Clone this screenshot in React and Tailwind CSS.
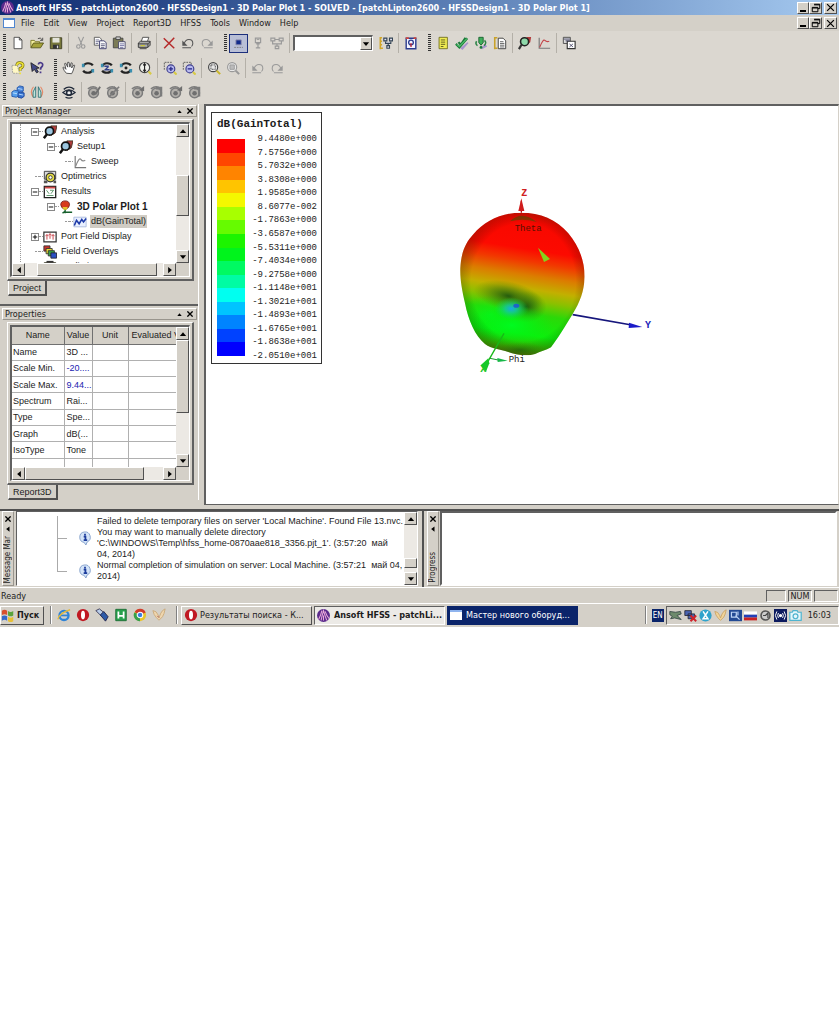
import React from 'react';
import clsx from 'clsx';

const raised = 'border border-t-white border-l-white border-r-[#505050] border-b-[#505050] bg-[#d4d0c8]';
const sunken = 'border border-t-[#606060] border-l-[#606060] border-r-white border-b-white';
const tahoma = 'font-["DejaVu_Sans_Condensed",sans-serif]';
const arial = 'font-["Liberation_Sans",Arial,sans-serif]';

const Svg = ({ children, className = 'size-[14px]' }) => (
  <svg viewBox="0 0 16 16" className={clsx('shrink-0', className)} fill="none" aria-hidden="true">
    {children}
  </svg>
);

// Shared shapes for the toolbar icons
const eye = (color) => (
  <>
    <path d="M1 8.5Q8 2.5 15 8.5Q8 14.5 1 8.5Z" fill="#eee" stroke={color} strokeWidth="1.4" />
    <circle cx="8" cy="9" r="2.8" stroke={color} strokeWidth="1.8" />
    <path d="M2 5Q8 0 14 5M4 14Q8 16 12 14" stroke={color} strokeWidth="1.5" />
  </>
);

const rotate = (
  <>
    <path d="M2.5 6Q4 2.5 8 2.5Q12 2.5 13.5 5" stroke="#222" strokeWidth="2.4" />
    <path d="M13.5 10Q12 13.5 8 13.5Q4 13.5 2.5 11" stroke="#222" strokeWidth="2.4" />
    <path d="M1 3h3v4H1zM12 9h3v4h-3z" fill="#3a8fb0" />
  </>
);

const grayEye = (extra) => (
  <>
    <circle cx="7.5" cy="9" r="5.6" fill="#b4b1ac" stroke="#7c7c7c" strokeWidth="1.7" />
    <circle cx="7.5" cy="9.5" r="2.6" fill="#6f6f6f" />
    <path d="M1 4.500Q7 0 12 4" stroke="#7c7c7c" strokeWidth="1.700" />
    {extra}
  </>
);

const lens = (color) => (
  <>
    <circle cx="7" cy="7" r="5.2" stroke={color} strokeWidth="1.3" fill="#e8e8e8" />
    <path d="M11 11l4 4" stroke={color === '#999' ? '#999' : '#c9b52c'} strokeWidth="2.4" />
  </>
);

const icons = {
  new: <path d="M3.5 1.5h6l3 3v10h-9zM9.5 1.5v3h3" fill="#fff" stroke="#444" />,
  open: (
    <>
      <path d="M1 13V5h4l1 1.500h5V8" fill="#f5f0a0" stroke="#77751f" />
      <path d="M1 13.500L4 8h11.500l-3.500 5.500z" fill="#a5a23a" stroke="#55531a" />
      <path d="M9 3q3-2 5 1.500M14.500 2v3h-3" stroke="#444" />
    </>
  ),
  save: (
    <>
      <path d="M1.500 2h13v12.500h-13z" fill="#77773a" stroke="#3c3c20" />
      <path d="M4 2h8v5.500H4z" fill="#e4e4da" />
      <path d="M4.500 10h7v4.500h-7z" fill="#333" />
      <path d="M9 11h1.500v3H9z" fill="#ddd" />
    </>
  ),
  cut: (
    <>
      <path d="M5 1l4 9M11 1L7 10" stroke="#999" strokeWidth="1.300" />
      <circle cx="5" cy="12" r="2" stroke="#999" strokeWidth="1.300" />
      <circle cx="10.500" cy="12" r="2" stroke="#999" strokeWidth="1.300" />
    </>
  ),
  copy: (
    <>
      <path d="M1.500 1.500h6l2 2v7h-8z" fill="#fff" stroke="#555" />
      <path d="M3 4.500h4M3 6.500h4M3 8.500h3" stroke="#668" />
      <path d="M7.500 5.500h5l2.500 2v7H7.500z" fill="#fff" stroke="#336" />
      <path d="M9 9h4.500M9 11h4.500M9 13h4" stroke="#557" />
    </>
  ),
  paste: (
    <>
      <path d="M1.500 2.500h11v11h-11z" fill="#7b7b55" stroke="#444" />
      <path d="M4.500 1h5v3h-5z" fill="#ccc" stroke="#444" />
      <path d="M7.500 6.500h7.500v8H7.500z" fill="#fff" stroke="#446" />
      <path d="M9 9h5M9 11h5M9 13h4" stroke="#669" />
    </>
  ),
  print: (
    <>
      <path d="M5 6l1.500-4.500h7L12 6" fill="#fff" stroke="#444" />
      <path d="M1.500 8L4 6h11v4.500L12.500 13h-11z" fill="#aaa" stroke="#333" />
      <path d="M1.500 9h11v4M12.500 9L15 6.500M3 14.500h8" stroke="#333" />
      <path d="M4 11h5" stroke="#c9c43a" strokeWidth="1.500" />
    </>
  ),
  remove: <path d="M2 2.500L14 14M14 2L2.500 14" stroke="#b52a2a" strokeWidth="1.700" />,
  undo: (
    <>
      <path d="M3.500 9Q5 4 9 4Q13.500 4 13.500 8.500Q13.500 10.500 12 12M1.500 13.500h10" stroke="#555" strokeWidth="1.200" />
      <path d="M1.500 5v6h6z" fill="#555" />
    </>
  ),
  redo: (
    <>
      <path d="M12.500 9Q11 4 7 4Q2.500 4 2.500 8.500Q2.500 10.500 4 12M4.500 13.500h10" stroke="#999" strokeWidth="1.200" />
      <path d="M14.500 5v6h-6z" fill="#999" />
    </>
  ),
  undoGray: (
    <>
      <path d="M3.500 9Q5 4 9 4Q13.500 4 13.500 8.500Q13.500 10.500 12 12M1.500 13.500h10" stroke="#999" strokeWidth="1.200" />
      <path d="M1.500 5v6h6z" fill="#999" />
    </>
  ),
  local: (
    <>
      <path d="M4.500 4.500h6v5.500h-6z" fill="#112a8c" stroke="#88a" />
      <path d="M2.500 13h10" stroke="#777" strokeDasharray="2 1" />
    </>
  ),
  remote: (
    <>
      <path d="M5 2.500h6v5H5zM6 9h4M8 8v6M5.500 13.500h5" stroke="#999" strokeWidth="1.300" />
      <path d="M6.500 4h3" stroke="#999" />
    </>
  ),
  network: (
    <path d="M1 2.500h4.500v3H1zM10.500 2.500H15v3h-4.500zM3 6v3h10V6M8 9v2M6 11.500h4v3H6zM6 4h4" stroke="#999" strokeWidth="1.300" />
  ),
  analysisConfig: (
    <>
      <path d="M1.500 1v14M1.500 2h2M1.500 6h2M1.500 10h2M1.500 14h3" stroke="#d1a72a" strokeWidth="1.800" />
      <path d="M5.500 2.500h3.500v3H5.500zM12 2.500h3.500v3H12zM7.500 6.500v2h6v-2M10.500 9v2M9 11h3v3H9z" fill="#dde" stroke="#345" strokeWidth="1.300" />
    </>
  ),
  queue: (
    <>
      <path d="M2.500 2.500h11v12h-11z" fill="#f4f4ff" stroke="#2b3b8e" strokeWidth="1.600" />
      <path d="M2 2.500h3.500M11 2.500h3" stroke="#d0453c" strokeWidth="2" />
      <circle cx="8" cy="7.500" r="2.700" stroke="#2b3b8e" strokeWidth="1.500" />
      <path d="M8 8v4.500" stroke="#b23" strokeWidth="1.500" />
    </>
  ),
  notes: (
    <>
      <path d="M3.500 1.500h9.500v13H3.500z" fill="#f0ec52" stroke="#6f6d1d" />
      <path d="M5.500 4.500h5M5.500 7h5M5.500 9.500h5M5.500 12h3" stroke="#55531a" />
    </>
  ),
  validate: (
    <>
      <path d="M6 14l8-7 1.500 1-7 8z" fill="#a793cc" />
      <path d="M1 9L5 13 14 2.500M4 7l2.500 3L12 2" stroke="#1c7a3a" strokeWidth="2.500" />
      <path d="M2 9.500L5 12 13.500 3" stroke="#4fc36f" strokeWidth="1.300" />
    </>
  ),
  analyze: (
    <>
      <path d="M9 15l6-3-2-3-5 4z" fill="#a793cc" />
      <path d="M5.500 1.500h5v6l-2.500 3-2.500-3z" fill="#3fae5b" stroke="#17602d" />
      <path d="M3 6Q1 9 4 11M12 5Q15 8 11.500 11" stroke="#2b8446" strokeWidth="1.700" />
      <circle cx="8" cy="13" r="1.600" fill="#1c7a3a" />
    </>
  ),
  profile: (
    <>
      <path d="M2 1v14M2 2h3M2 14h3" stroke="#c9a22a" strokeWidth="1.800" />
      <path d="M6 2.500h5.500l3 3v9H6z" fill="#fff" stroke="#333" />
      <path d="M8 6.500h4M8 8.500h5M8 10.500h5M8 12.500h5" stroke="#555" />
    </>
  ),
  magnify: (
    <>
      <path d="M10 1h5l-1 6-4 3z" fill="#b23b3b" />
      <circle cx="7.500" cy="6.500" r="4.600" fill="#8fd8a9" stroke="#222" strokeWidth="1.800" />
      <path d="M4 10L1 15" stroke="#333" strokeWidth="2.500" />
    </>
  ),
  plot: (
    <>
      <path d="M2.500 2v12H15" stroke="#777" strokeWidth="1.300" />
      <path d="M3 13Q7 3 9 5T14 6" stroke="#c4454a" strokeWidth="1.400" />
    </>
  ),
  windows: (
    <>
      <path d="M1.500 1.500h8v7h-8z" fill="#ddd" stroke="#444" />
      <path d="M6 6h9v8.500H6z" fill="#fff" stroke="#333" strokeWidth="1.300" />
      <path d="M8.500 9l4 3.500M12.500 9l-4 3.500M2 3.500h7M4 5.500h5" stroke="#446" />
    </>
  ),
  helpDoc: (
    <>
      <path d="M1 5h6l3 9H2z" fill="#fff8c4" stroke="#999" strokeDasharray="2 1" />
      <path d="M6.500 5Q7 1.500 10.500 2Q14.500 2.500 13.500 6Q12.500 8 10.500 8.500V11" stroke="#77710a" strokeWidth="3.200" />
      <path d="M6.500 5Q7 1.500 10.500 2Q14.500 2.500 13.500 6Q12.500 8 10.500 8.500V11M10.500 13v2" stroke="#f2e53a" strokeWidth="1.800" />
    </>
  ),
  helpPointer: (
    <>
      <path d="M1 2l1.500 10 2.500-2.500 2.500 4 2-1-2.500-4 3.500-.5z" fill="#444a88" stroke="#222" />
      <path d="M9.500 4Q10 1.500 12.500 2Q15.500 3 14 6Q12 7.500 12 10M12 12v2" stroke="#4a3a8a" strokeWidth="2" />
    </>
  ),
  hand: (
    <path
      d="M5 14Q2 11 1 7.500L2 7l2.500 2.500L3 3l1.300-.5L6.500 7 6.500 1.500h1.500L9 7l1.500-5 1.300.5L11 8l2.500-3.500 1 .5-2 6.500-1.500 3z"
      fill="#fff"
      stroke="#444"
    />
  ),
  rotateA: rotate,
  rotateB: (
    <>
      {rotate}
      <path d="M5 6h5M10 6l-4 4h5" stroke="#33418a" strokeWidth="1.600" />
    </>
  ),
  rotateC: (
    <>
      {rotate}
      <circle cx="8" cy="8" r="1.700" fill="#222" />
    </>
  ),
  zoom: (
    <>
      <circle cx="7.500" cy="7.500" r="5.800" fill="#f1f1ec" stroke="#444" strokeWidth="1.300" />
      <path d="M7.500 4v7M6 5l1.500-2L9 5M6 10l1.500 2L9 10" stroke="#222" strokeWidth="1.300" />
      <path d="M12 12l3 3" stroke="#d7ca45" strokeWidth="2.500" />
    </>
  ),
  zoomIn: (
    <>
      <path d="M1.500 10V1.500h9" stroke="#555" strokeDasharray="2 1" />
      <circle cx="9" cy="9" r="4.500" fill="#b7b9ef" stroke="#3d3d8d" strokeWidth="1.300" />
      <path d="M6.500 9h5M9 6.500v5" stroke="#2a2a88" strokeWidth="1.500" />
      <path d="M12.500 12.500l3 3" stroke="#d7ca45" strokeWidth="2.500" />
    </>
  ),
  zoomOut: (
    <>
      <path d="M1.500 10V1.500h9v3" stroke="#555" strokeDasharray="2 1" />
      <circle cx="9" cy="9" r="4.500" fill="#b7b9ef" stroke="#3d3d8d" strokeWidth="1.300" />
      <path d="M6.500 9h5" stroke="#2a2a88" strokeWidth="1.500" />
      <path d="M12.500 12.500l3 3" stroke="#d7ca45" strokeWidth="2.500" />
    </>
  ),
  fitAll: (
    <>
      {lens('#444')}
      <path d="M4.500 4.500h5v5h-5z" stroke="#444" strokeDasharray="2 1" />
    </>
  ),
  fitSel: (
    <>
      {lens('#999')}
      <path d="M4.500 4.500h5v5h-5z" fill="#bbb" stroke="#999" />
    </>
  ),
  boxes: (
    <>
      <path d="M7 3l3-2 4 1v5l-3 2-4-1z" fill="#4a86dc" stroke="#2356a8" />
      <path d="M1 8l3-2 5 1v5l-3 2-5-1z" fill="#56a0ee" stroke="#2356a8" />
      <path d="M8 9l3-1 4 1v4l-3 2-4-1z" fill="#3571cf" stroke="#20489a" />
      <path d="M2 9l5 1M8 4l5 1M9 10.500l5 1" stroke="#bfe0ff" />
    </>
  ),
  boundary: (
    <>
      <path d="M4 2Q-1 8 4 14M12 2Q17 8 12 14" stroke="#e58a68" strokeWidth="1.300" />
      <path d="M6.500 2v12h-3V8zM9.500 2v12h3V8z" fill="#bfe6dc" stroke="#2c6f74" />
    </>
  ),
  eye: eye('#222b3a'),
  eyeOff1: grayEye(<path d="M7 8l3 2 5-8" stroke="#6f6f6f" strokeWidth="2.200" />),
  eyeOff2: grayEye(<path d="M3 14L15 2M9 2l5 5" stroke="#7c7c7c" strokeWidth="2" />),
  eyeOff3: grayEye(<path d="M9 6l6-5v6z" fill="#6f6f6f" />),
  eyeOff4: grayEye(<path d="M7 2h7v11h-2.500V5H7z" fill="#7c7c7c" />),
};

const Tool = ({ name, label, active }) => (
  <button
    type="button"
    aria-label={label || name}
    className={clsx(
      'flex h-[19px] w-[19px] shrink-0 items-center justify-center',
      active && 'border border-[#1c2f7c] bg-[#b9bfd6]'
    )}
  >
    <Svg>{icons[name]}</Svg>
  </button>
);

const Sep = () => (
  <div className="flex w-1.5 shrink-0 justify-center">
    <div className="h-5 w-px bg-[#b4b0a8]" />
  </div>
);

const Grip = ({ first }) => (
  <div className={clsx('shrink-0 pl-[3px]', first ? 'w-2' : 'ml-[5px] w-2')}>
    <div className="h-[18px] w-[3px] bg-[repeating-linear-gradient(#333_0_1px,#dbd7d0_1px_2px)]" />
  </div>
);

// '|' is a separator, ':' is a grip
const Tools = ({ items }) =>
  items.map((item, i) => {
    if (item === '|') return <Sep key={i} />;
    if (item === ':') return <Grip key={i} first={i === 0} />;
    return <Tool key={i} name={item} active={item === 'local'} />;
  });

const WindowButtons = () => (
  <div className="flex items-center pr-0.5">
    <button type="button" aria-label="Minimize" className={clsx(raised, 'flex h-3 w-3 items-end justify-center')}>
      <span className="mb-px h-0.5 w-1.5 bg-black" />
    </button>
    <button type="button" aria-label="Restore" className={clsx(raised, 'flex h-3 w-[13px] items-center justify-center')}>
      <Svg className="size-[10px]">
        <path d="M5 2h9v7h-3M5 3h9M2 7h9v7H2zM2 8h9" stroke="#000" strokeWidth="1.600" />
      </Svg>
    </button>
    <button type="button" aria-label="Close" className={clsx(raised, 'ml-0.5 flex h-3 w-[13px] items-center justify-center')}>
      <Svg className="size-[9px]">
        <path d="M2 2l12 12M14 2L2 14" stroke="#000" strokeWidth="2.200" />
      </Svg>
    </button>
  </div>
);

const arrows = {
  up: 'M3 11l5-6 5 6z',
  down: 'M3 5l5 6 5-6z',
  left: 'M11 3l-6 5 6 5z',
  right: 'M5 3l6 5-6 5z',
};

const ScrollButton = ({ dir }) => (
  <button type="button" aria-label={`Scroll ${dir}`} className={clsx(raised, 'flex size-[13px] shrink-0 items-center justify-center')}>
    <Svg className="size-[10px]">
      <path d={arrows[dir]} fill="#000" />
    </Svg>
  </button>
);

const VScroll = ({ before, thumb }) => (
  <div className="flex w-[13px] shrink-0 flex-col bg-[#ece9e4]">
    <ScrollButton dir="up" />
    <div className={before} />
    <div className={clsx(raised, thumb)} />
    <div className="flex-1" />
    <ScrollButton dir="down" />
  </div>
);

const HScroll = ({ before, thumb }) => (
  <div className="flex bg-[#d4d0c8]">
    <div className="flex flex-1 bg-[#ece9e4]">
      <ScrollButton dir="left" />
      <div className={before} />
      <div className={clsx(raised, thumb)} />
      <div className="flex-1" />
      <ScrollButton dir="right" />
    </div>
    <div className="w-[13px]" />
  </div>
);

const PanelHeader = ({ title }) => (
  <div className="mr-px ml-0.5 flex h-3 items-center border border-t-white border-l-white border-r-[#99958d] border-b-[#99958d]">
    <h2 className="flex-1 pl-0.5 text-[9px] leading-[10px]">{title}</h2>
    <button type="button" aria-label={`Collapse ${title}`} className="mr-[5px]">
      <Svg className="size-[5px]">
        <path d="M1 13l7-9 7 9z" fill="#000" />
      </Svg>
    </button>
    <button type="button" aria-label={`Close ${title}`} className="mr-[3px]">
      <Svg className="size-[6px]">
        <path d="M1 1l14 14M15 1L1 15" stroke="#000" strokeWidth="3.500" />
      </Svg>
    </button>
  </div>
);

const TabLabel = ({ children }) => (
  <button
    type="button"
    className={clsx(arial, 'ml-2 h-[15px] border-r-2 border-b-2 border-l border-r-[#505050] border-b-[#505050] border-l-white px-1 text-[9px] leading-3')}
  >
    {children}
  </button>
);

const Sheet = ({ children }) => (
  <div className="mt-0.5 mr-1 ml-[7px] border border-t-white border-l-white border-r-2 border-b-2 border-r-[#606060] border-b-[#606060] p-0.5">
    <div className={clsx(sunken, 'border-t-2 border-l-2')}>{children}</div>
  </div>
);

const treeIcons = {
  analysis: (
    <>
      <path d="M9 1h7l-2 8-5 3z" fill="#b03c3c" stroke="#432" />
      <circle cx="7.500" cy="7" r="4.600" fill="#9cc6e0" stroke="#111" strokeWidth="2" />
      <path d="M4.500 10.500L1 15" stroke="#111" strokeWidth="2.800" />
    </>
  ),
  sweep: (
    <>
      <path d="M2.500 1v13.500H15" stroke="#777" strokeWidth="1.300" />
      <path d="M3 13Q7 2 9 5T14 6" stroke="#888" strokeWidth="1.300" />
    </>
  ),
  optimetrics: (
    <>
      <path d="M1.500 1.500h13v9h-13z" fill="#ddd" stroke="#333" />
      <circle cx="8.500" cy="8.500" r="5" fill="#e8df44" stroke="#333" strokeWidth="1.400" />
      <circle cx="8.500" cy="8.500" r="2" fill="#fff" stroke="#333" />
      <path d="M1 12h4v3H1zM12 12h3v3h-3z" fill="#555" />
    </>
  ),
  results: (
    <>
      <path d="M1.500 1.500h13v13h-13z" fill="#fff" stroke="#222" strokeWidth="1.500" />
      <path d="M2 3h12" stroke="#d04a4a" strokeWidth="2" />
      <path d="M4 6l3 4M8 6h4l-3 4M4 12h8" stroke="#4a8a5a" />
    </>
  ),
  polar: (
    <>
      <path d="M7 1Q12 1 12 5.500Q12 9 7 11Q2 9 2 5.500Q2 1 7 1Z" fill="#d83a1c" stroke="#722" />
      <path d="M4 8h6l-1.500 3.500h-3z" fill="#e3c22d" />
      <path d="M7 11v4M7 14h8M7 13l-3 2" stroke="#17602d" strokeWidth="1.600" />
    </>
  ),
  trace: (
    <>
      <path d="M1 2.500h14v11H1z" fill="#e9f0ff" stroke="#a9b9dc" />
      <path d="M1.500 12L4 6l3 4 3-5 2 3 3-4" stroke="#1d3aa8" strokeWidth="1.800" />
    </>
  ),
  port: (
    <>
      <path d="M1 2.500h14v11H1z" fill="#fff" stroke="#333" strokeWidth="1.400" />
      <path d="M4.500 6v5M8 5v5M11.500 6v5M3 7l1.500-2L6 7M6.500 6L8 4l1.500 2M10 7l1.500-2L13 7" stroke="#c4343b" />
    </>
  ),
  overlays: (
    <>
      <path d="M1 1h7v6H1z" fill="#c8332c" stroke="#333" />
      <path d="M3.500 4h7v6h-7z" fill="#e8d936" stroke="#333" />
      <path d="M6 6.500h7v6H6z" fill="#37a543" stroke="#333" />
      <path d="M9 9h6.500v6H9z" fill="#2a4fc4" stroke="#223" />
    </>
  ),
  radiation: (
    <>
      <path d="M1.500 3h13v10h-13z" fill="#f0e04a" stroke="#333" />
      <path d="M4 2h8" stroke="#333" strokeWidth="2" />
    </>
  ),
};

const treeRows = [
  { label: 'Analysis', icon: 'analysis', box: '-', indent: 'ml-2.5' },
  { label: 'Setup1', icon: 'analysis', box: '-', indent: 'ml-[26px]' },
  { label: 'Sweep', icon: 'sweep', indent: 'ml-10' },
  { label: 'Optimetrics', icon: 'optimetrics', indent: 'ml-2.5' },
  { label: 'Results', icon: 'results', box: '-', indent: 'ml-2.5' },
  { label: '3D Polar Plot 1', icon: 'polar', box: '-', indent: 'ml-[26px]', bold: true },
  { label: 'dB(GainTotal)', icon: 'trace', indent: 'ml-10', selected: true },
  { label: 'Port Field Display', icon: 'port', box: '+', indent: 'ml-2.5' },
  { label: 'Field Overlays', icon: 'overlays', indent: 'ml-2.5' },
  { label: 'Radiation', icon: 'radiation', box: '+', indent: 'ml-2.5' },
];

const TreeRow = ({ row }) => (
  <li className={clsx('flex h-[15px] items-center', row.indent)}>
    {row.box ? (
      <button type="button" aria-label={`Toggle ${row.label}`} className="size-2 shrink-0 border border-[#888] bg-white">
        <Svg className="size-[6px]">
          <path d={row.box === '+' ? 'M2 8h12M8 2v12' : 'M2 8h12'} stroke="#000" strokeWidth="2.500" />
        </Svg>
      </button>
    ) : (
      <span className="ml-1 h-px w-1 shrink-0 border-t border-dotted border-[#999]" />
    )}
    <span className="h-px w-1 shrink-0 border-t border-dotted border-[#999]" />
    <Svg>{treeIcons[row.icon]}</Svg>
    <span
      className={clsx(
        'ml-[3px] px-px leading-[13px] whitespace-nowrap',
        row.bold ? 'text-[10px] font-bold' : 'text-[9px]',
        row.selected && 'bg-[#d0ccc4]'
      )}
    >
      {row.label}
    </span>
  </li>
);

const ProjectManager = () => (
  <section>
    <PanelHeader title="Project Manager" />
    <Sheet>
      <div className="flex h-[139px] bg-white">
        <div className={clsx(arial, 'min-w-0 flex-1 overflow-hidden')}>
          <ul className="ml-2 border-l border-dotted border-[#999]">
            {treeRows.map((row) => (
              <TreeRow key={row.label} row={row} />
            ))}
          </ul>
        </div>
        <VScroll before="h-[38px]" thumb="h-[41px]" />
      </div>
      <HScroll before="w-3" thumb="w-[120px]" />
    </Sheet>
    <TabLabel>Project</TabLabel>
  </section>
);

const properties = [
  ['Name', '3D ...'],
  ['Scale Min.', '-20....'],
  ['Scale Max.', '9.44...'],
  ['Spectrum', 'Rai...'],
  ['Type', 'Spe...'],
  ['Graph', 'dB(...'],
  ['IsoType', 'Tone'],
  ['\u00a0', ''],
];

const Properties = () => (
  <section className="mt-2 border-t-2 border-[#606060] pt-0.5">
    <PanelHeader title="Properties" />
    <Sheet>
      <div className="flex h-[140px] bg-white">
        <div className={clsx(arial, 'min-w-0 flex-1 overflow-hidden')}>
          <table className="h-[148px] w-full table-fixed border-collapse text-left text-[9px] leading-3">
            <thead>
              <tr className="h-[17px] bg-[#d4d0c8] text-center">
                <th scope="col" className="w-[52px] border-r border-b border-[#707070] font-normal">Name</th>
                <th scope="col" className="w-7 border-r border-b border-[#707070] font-normal">Value</th>
                <th scope="col" className="w-9 border-r border-b border-[#707070] font-normal">Unit</th>
                <th scope="col" className="overflow-hidden border-b border-[#707070] pl-[3px] text-left font-normal whitespace-nowrap">
                  Evaluated Value
                </th>
              </tr>
            </thead>
            <tbody>
              {properties.map(([name, value], i) => (
                <tr key={i}>
                  <td className="border-r border-b border-[#b0b0b0] pl-px whitespace-nowrap">{name}</td>
                  <td
                    className={clsx(
                      'overflow-hidden border-r border-b border-[#b0b0b0] pl-0.5 whitespace-nowrap',
                      name.startsWith('Scale') && 'text-[#2222b0]'
                    )}
                  >
                    {value}
                  </td>
                  <td className="border-r border-b border-[#b0b0b0]" />
                  <td className="border-b border-[#b0b0b0]" />
                </tr>
              ))}
            </tbody>
          </table>
        </div>
        <VScroll before="h-0" thumb="h-[73px]" />
      </div>
      <HScroll before="w-0" thumb="w-[119px]" />
    </Sheet>
    <TabLabel>Report3D</TabLabel>
  </section>
);

const legendValues = [
  '9.4480e+000', '7.5756e+000', '5.7032e+000', '3.8308e+000', '1.9585e+000', '8.6077e-002',
  '-1.7863e+000', '-3.6587e+000', '-5.5311e+000', '-7.4034e+000', '-9.2758e+000', '-1.1148e+001',
  '-1.3021e+001', '-1.4893e+001', '-1.6765e+001', '-1.8638e+001', '-2.0510e+001',
];

const legendColors = [
  '#ff0000', '#ff4600', '#ff8400', '#ffc400', '#f4f800', '#a8ff00', '#66fb00', '#1cf400',
  '#00f41c', '#00fa62', '#00fca4', '#00fff0', '#00c4ff', '#0084ff', '#0042ff', '#0000ff',
];

const Legend = () => (
  <div className='w-[111px] shrink-0 border border-[#333] bg-white pt-1 pr-[3px] pl-[5px] font-["Liberation_Mono",monospace]'>
    <h3 className="text-[11px] leading-[14px] font-bold whitespace-nowrap">dB(GainTotal)</h3>
    <div className="mt-0.5 flex justify-between">
      <div className="mt-1.5 mb-[7px] flex w-7 flex-col">
        {legendColors.map((color) => (
          <div key={color} className="flex-1" style={{ backgroundColor: color }} />
        ))}
      </div>
      <ul className="flex h-[230px] flex-col justify-between pr-px text-right text-[9px] leading-[13px] text-[#222]">
        {legendValues.map((value) => (
          <li key={value}>{value}</li>
        ))}
      </ul>
    </div>
  </div>
);

// Radiation pattern with its axes
const PolarPlot = () => (
  <svg viewBox="0 0 690 600" className="h-[200px] w-[230px] shrink-0" role="img" aria-label="3D Polar Plot 1">
    <defs>
      <linearGradient id="gain" x1="0.57" y1="0" x2="0.43" y2="1">
        <stop offset="0" stopColor="#d81200" />
        <stop offset="0.08" stopColor="#f80800" />
        <stop offset="0.26" stopColor="#fc0a00" />
        <stop offset="0.34" stopColor="#f23800" />
        <stop offset="0.43" stopColor="#dc7c00" />
        <stop offset="0.52" stopColor="#c2b000" />
        <stop offset="0.59" stopColor="#8cc000" />
        <stop offset="0.68" stopColor="#2cd808" />
        <stop offset="0.82" stopColor="#0cf00c" />
        <stop offset="0.91" stopColor="#35b804" />
        <stop offset="0.97" stopColor="#557a08" />
      </linearGradient>
      <radialGradient id="shade" cx="0.5" cy="0.48" r="0.56">
        <stop offset="0.7" stopColor="#000" stopOpacity="0" />
        <stop offset="1" stopColor="#3a2c00" stopOpacity="0.45" />
      </radialGradient>
      <radialGradient id="dimple">
        <stop offset="0" stopColor="#18a8e8" />
        <stop offset="0.35" stopColor="#12c8a0" stopOpacity="0.8" />
        <stop offset="1" stopColor="#0ae040" stopOpacity="0" />
      </radialGradient>
      <radialGradient id="dark">
        <stop offset="0" stopColor="#124a10" stopOpacity="0.85" />
        <stop offset="0.5" stopColor="#2a6410" stopOpacity="0.45" />
        <stop offset="1" stopColor="#4c7a00" stopOpacity="0" />
      </radialGradient>
      <radialGradient id="glow">
        <stop offset="0" stopColor="#00fb20" />
        <stop offset="1" stopColor="#00f010" stopOpacity="0" />
      </radialGradient>
      <clipPath id="body">
        <path d="M244 98C300 98 350 118 385 160C415 196 434 240 434 290C432 335 420 365 398 402C375 440 350 480 333 502C318 512 300 514 285 522C260 530 225 524 205 516C180 507 155 508 135 492C105 468 85 420 75 370C66 330 60 300 61 265C63 220 75 190 100 163C135 122 185 98 244 98Z" />
      </clipPath>
    </defs>
    <path d="M398 404L575 435" stroke="#16167c" strokeWidth="5" />
    <path d="M567 428L607 441L566 444Z" fill="#1a1ac8" />
    <g clipPath="url(#body)">
      <rect x="50" y="90" width="400" height="450" fill="url(#gain)" />
      <ellipse cx="150" cy="405" rx="90" ry="60" fill="url(#glow)" opacity="0.7" />
      <ellipse cx="205" cy="348" rx="105" ry="44" fill="url(#dark)" transform="rotate(12 205 348)" />
      <ellipse cx="258" cy="380" rx="62" ry="48" fill="url(#dark)" />
      <ellipse cx="215" cy="436" rx="125" ry="60" fill="url(#glow)" />
      <ellipse cx="214" cy="386" rx="52" ry="34" fill="url(#dimple)" />
      <ellipse cx="229" cy="377" rx="9" ry="6" fill="#1d64c8" />
      <ellipse cx="240" cy="510" rx="80" ry="24" fill="url(#dark)" opacity="0.5" />
      <path d="M210 124Q245 90 290 126Q250 114 210 124Z" fill="#6b4a00" opacity="0.75" />
      <rect x="50" y="90" width="400" height="450" fill="url(#shade)" />
    </g>
    <path d="M244 98V62" stroke="#b01010" strokeWidth="4" />
    <path d="M244 55L253 93H235Z" fill="#d01c1c" />
    <path d="M294 203L330 237L312 246Z" fill="#84d21c" />
    <path d="M192 460L135 560" stroke="#18b818" strokeWidth="4" />
    <path d="M122 556L145 535L148 550L138 575Z" fill="#18c828" />
    <path d="M150 535L175 540" stroke="#159a2a" strokeWidth="3" />
    <path d="M172 534L203 542L173 546Z" fill="#18b848" />
    <g className='font-["Liberation_Mono",monospace]' fontSize="30">
      <text x="244" y="47" fill="#d02020" fontWeight="bold">Z</text>
      <text x="615" y="444" fill="#1a1ab8" fontWeight="bold">Y</text>
      <text x="121" y="577" fill="#18c828" fontWeight="bold">X</text>
      <text x="224" y="153" fill="#5a1000" fontSize="27">Theta</text>
      <text x="206" y="546" fill="#222" fontSize="27">Phi</text>
    </g>
  </svg>
);

const SideStrip = ({ title }) => (
  <div className="flex w-3 shrink-0 flex-col items-center border border-t-white border-l-white border-r-[#99958d] border-b-[#99958d] pt-1 pb-0.5">
    <button type="button" aria-label={`Close ${title}`} className="flex">
      <Svg className="size-[6px]">
        <path d="M1 1l14 14M15 1L1 15" stroke="#000" strokeWidth="3.500" />
      </Svg>
    </button>
    <button type="button" aria-label={`Expand ${title}`} className="mt-1 flex">
      <Svg className="size-[6px]">
        <path d="M12 1v14L3 8z" fill="#000" />
      </Svg>
    </button>
    <div className="flex-1" />
    <h2 className="rotate-180 text-[8px] leading-[10px] whitespace-nowrap [writing-mode:vertical-rl]">{title}</h2>
  </div>
);

const Info = () => (
  <Svg>
    <path d="M2 7a6 6 0 1 1 8.500 5.500L9 16l-2-3A6 6 0 0 1 2 7z" fill="#d4e4f8" stroke="#7e9cc8" />
    <path d="M8 3v2M6.500 6.500H8.500V10.500M6.500 10.500h4" stroke="#1c3c9c" strokeWidth="2" />
  </Svg>
);

const Message = ({ lines, last }) => (
  <li className="flex items-center">
    <span className="flex w-2.5 flex-col self-stretch">
      <span className="flex-1 border-b border-l border-[#aaa]" />
      <span className={clsx('flex-1', !last && 'border-l border-[#aaa]')} />
    </span>
    <span className="mr-[5px] ml-[11px] flex">
      <Info />
    </span>
    <p>
      {lines.map((line) => (
        <span key={line} className="block whitespace-pre">{line}</span>
      ))}
    </p>
  </li>
);

const Messages = () => (
  <section className="flex w-[424px] shrink-0 border-r-2 border-[#505050] pr-1 pb-px pl-0.5">
    <SideStrip title="Message Mar" />
    <div className={clsx(sunken, 'ml-0.5 flex h-[75px] min-w-0 flex-1 bg-white')}>
      <ul className={clsx(arial, 'min-w-0 flex-1 overflow-hidden pt-1 pl-10 text-[9px] leading-[11px]')}>
        <Message
          lines={[
            "Failed to delete temporary files on server 'Local Machine'. Found File 13.nvc.",
            'You may want to manually delete directory',
            "'C:\\WINDOWS\\Temp\\hfss_home-0870aae818_3356.pjt_1'. (3:57:20  май",
            '04, 2014)',
          ]}
        />
        <Message last lines={['Normal completion of simulation on server: Local Machine. (3:57:21  май 04,', '2014)']} />
      </ul>
      <VScroll before="h-[33px]" thumb="h-[10px]" />
    </div>
  </section>
);

const Progress = () => (
  <section className="flex min-w-0 flex-1 pr-0.5 pb-px pl-[3px]">
    <SideStrip title="Progress" />
    <div className={clsx(sunken, 'ml-px flex-1 border-2 bg-white')} />
  </section>
);

const HfssLogo = () => (
  <Svg className="size-[13px]">
    <circle cx="8" cy="8" r="8" fill="#5a2a8c" />
    <path d="M2 13Q5 7 6 2M5 14Q6 9 8 2Q10 9 12 14M10 3Q12 9 15 12M8 14V8" stroke="#e8a8d8" strokeWidth="1.300" />
  </Svg>
);

const opera = (
  <>
    <circle cx="8" cy="8" r="7" fill="#c01822" />
    <ellipse cx="8" cy="8" rx="2.300" ry="5" fill="#fff" />
  </>
);

const quickLaunch = {
  'Internet Explorer': (
    <>
      <circle cx="8" cy="8.500" r="5.200" stroke="#2f83d6" strokeWidth="2.600" />
      <path d="M4 8.500h9" stroke="#2f83d6" strokeWidth="2" />
      <path d="M1 13Q2 6 15 2" stroke="#e4b93a" strokeWidth="1.500" />
    </>
  ),
  Opera: opera,
  Phone: (
    <>
      <path d="M1 3l4-2 5 4-3 4z" fill="#b9cdea" stroke="#335" />
      <path d="M6 8l4-4 5 6-3 5z" fill="#2d5aa8" stroke="#224" />
    </>
  ),
  uTorrent: (
    <>
      <path d="M2 1.500h12v13H2z" fill="#27a04c" stroke="#176a30" />
      <path d="M5 12V4M5 9h6M11 4v8" stroke="#fff" strokeWidth="2" />
    </>
  ),
  Chrome: (
    <>
      <circle cx="8" cy="8" r="7" fill="#e8c52c" />
      <path d="M8 8L2 4.500A7 7 0 0 1 14.500 5z" fill="#d23a2c" />
      <path d="M8 8L1.500 5A7 7 0 0 0 8 15z" fill="#38a04a" />
      <circle cx="8" cy="8" r="3.200" fill="#3c7fe0" stroke="#fff" strokeWidth="1.200" />
    </>
  ),
  Butterfly: (
    <>
      <path d="M1 3q4 0 6 5l1 3 2-5q2-4 5-5-1 6-3 9l-4 4-3-3q-3-3-4-8z" fill="#efd6ae" stroke="#c9a878" />
      <path d="M8 11l-2-2" stroke="#a55" />
    </>
  ),
};

const trayIcons = [
  <path key="t" d="M1 3l7 1 6-1 1 3-5 2 5 5-8-2-5 1 2-3-3-2z" fill="#6d8a6c" stroke="#344" />,
  <g key="n">
    <path d="M1 2h8v6H1zM5 6h8v6H5z" fill="#4a64b0" stroke="#223" />
    <path d="M8 8l7 7M15 8l-7 7" stroke="#d0222a" strokeWidth="2.400" />
  </g>,
  <g key="b">
    <circle cx="8" cy="8" r="7.500" fill="#2fa3cc" />
    <path d="M5 3l6 9H5l6-9" stroke="#fff" strokeWidth="1.800" />
  </g>,
  <path key="f" d="M1 3q4 0 6 5l1 3 2-5q2-4 5-5-1 6-3 9l-4 4-3-3q-3-3-4-8z" fill="#f0d49a" stroke="#c9a060" />,
  <g key="w">
    <path d="M0 1h16v14H0z" fill="#234a94" />
    <path d="M3 4h6v6H3zM8 8l5 5M11 3v5" stroke="#bcd2f4" strokeWidth="1.500" />
  </g>,
  <g key="r">
    <path d="M0 3h16v4H0z" fill="#fff" />
    <path d="M0 7h16v3.500H0z" fill="#2340b8" />
    <path d="M0 10.500h16V14H0z" fill="#cc2222" />
  </g>,
  <g key="s">
    <circle cx="8" cy="8" r="5.500" fill="#ccc" stroke="#555" strokeWidth="2" />
    <path d="M5 8h3l3-3v6" stroke="#444" strokeWidth="1.500" />
  </g>,
  <g key="a">
    <path d="M0 0h16v16H0z" fill="#0c1a5e" />
    <circle cx="8" cy="8" r="2" fill="#fff" />
    <path d="M5.500 5Q3.500 8 5.500 11M10.500 5Q12.500 8 10.500 11M3.500 3Q0 8 3.500 13M12.500 3Q16 8 12.500 13" stroke="#fff" strokeWidth="1.200" />
  </g>,
  <g key="c">
    <path d="M1 4h3l1-2h5l1 2h4v10H1z" fill="#e6f7fb" stroke="#4fb4cf" strokeWidth="1.500" />
    <circle cx="8" cy="9" r="3" stroke="#4fb4cf" strokeWidth="1.500" />
  </g>,
];

const TaskSep = () => <div className="h-[18px] w-0.5 shrink-0 border-l border-[#808080] bg-white" />;

const Taskbar = () => (
  <footer className="flex h-6 items-center border-t border-white bg-[#d4d0c8] pb-px">
    <button type="button" className={clsx(raised, 'flex h-[19px] w-11 shrink-0 items-center gap-0.5 text-[9px] font-bold')}>
      <Svg>
        <path d="M1 3q3-2 6 0v5q-3-2-6 0z" fill="#d8502c" />
        <path d="M8 3.500q3 2 6 0v5q-3 2-6 0z" fill="#5aa43c" />
        <path d="M1 9.500q3-2 6 0v5q-3-2-6 0z" fill="#3568c8" />
        <path d="M8 10q3 2 6 0v5q-3 2-6 0z" fill="#e8c034" />
      </Svg>
      Пуск
    </button>
    <div className="ml-1.5">
      <TaskSep />
    </div>
    <div className="ml-[5px] flex gap-[5px]">
      {Object.entries(quickLaunch).map(([name, icon]) => (
        <button key={name} type="button" aria-label={name}>
          <Svg>{icon}</Svg>
        </button>
      ))}
    </div>
    <div className="mr-[3px] ml-2.5">
      <TaskSep />
    </div>
    <div className="flex gap-0.5 text-[9px]">
      <button type="button" className={clsx(raised, 'flex h-[19px] w-[131px] items-center gap-0.5 pl-0.5 whitespace-nowrap')}>
        <Svg>{opera}</Svg>
        Результаты поиска - К...
      </button>
      <button type="button" className={clsx(sunken, 'flex h-[19px] w-[131px] items-center gap-1 bg-[#eceae6] pl-0.5 font-bold whitespace-nowrap')}>
        <HfssLogo />
        Ansoft HFSS - patchLi...
      </button>
      <button type="button" className="flex h-[19px] w-[131px] items-center gap-1 bg-[#0a246a] pl-[3px] whitespace-nowrap text-white">
        <span className="h-2.5 w-3 border-t-2 border-[#8fb4ee] bg-white" />
        Мастер нового оборуд...
      </button>
    </div>
    <div className="flex-1" />
    <TaskSep />
    <button type="button" className="ml-[5px] h-[13px] w-3 bg-[#0a246a] text-[8px] leading-[13px] text-white">EN</button>
    <div className={clsx(sunken, 'ml-0.5 flex h-[19px] items-center gap-0.5 border-t-[#99958d] pr-[7px] pl-0.5 text-[9px]')}>
      {trayIcons.map((icon, i) => (
        <Svg key={i} className="size-[13px]">{icon}</Svg>
      ))}
      <time className="ml-1">16:03</time>
    </div>
  </footer>
);

const menus = ['File', 'Edit', 'View', 'Project', 'Report3D', 'HFSS', 'Tools', 'Window', 'Help'];

export default function App() {
  return (
    <div className="min-h-screen bg-white">
      <div className={clsx(tahoma, 'overflow-hidden bg-[#d4d0c8] text-[9px] leading-3 text-[#1c1c1c]')}>
        <header>
          <div className="flex h-[15px] items-center bg-linear-to-r from-[#0f2a70] to-[#a6caf0]">
            <span className="pl-px">
              <HfssLogo />
            </span>
            <h1 className="flex-1 pl-0.5 text-[9px] font-bold whitespace-nowrap text-white">
              Ansoft HFSS - patchLipton2600 - HFSSDesign1 - 3D Polar Plot 1 - SOLVED - [patchLipton2600 - HFSSDesign1 - 3D Polar Plot 1]
            </h1>
            <WindowButtons />
          </div>
          <nav className="flex h-4 items-center">
            <span className="ml-[3px] h-2.5 w-3 border border-t-2 border-[#4f86d0] bg-white" />
            <div className="ml-1.5 flex flex-1 gap-[9px]">
              {menus.map((menu) => (
                <button key={menu} type="button">{menu}</button>
              ))}
            </div>
            <WindowButtons />
          </nav>
        </header>

        <div className="bg-[#dbd7d0]">
          <div className="flex h-6 items-center">
            <Tools items={[':', 'new', 'open', 'save', '|', 'cut', 'copy', 'paste', '|', 'print', '|', 'remove', 'undo', 'redo', ':', 'local', 'remote', 'network', '|']} />
            <div className="relative mr-[3px] ml-px">
              <select aria-label="Machine" className={clsx(sunken, 'block h-4 w-20 appearance-none border-t-2 border-l-2 bg-white')} />
              <span className={clsx(raised, 'pointer-events-none absolute top-0.5 right-px flex h-[13px] w-3 items-center justify-center')}>
                <Svg className="size-[10px]">
                  <path d={arrows.down} fill="#000" />
                </Svg>
              </span>
            </div>
            <Tools items={['analysisConfig', '|', 'queue']} />
            <Grip />
            <Tools items={['notes', 'validate', 'analyze', 'profile', '|', 'magnify', 'plot', '|', 'windows']} />
          </div>
          <div className="flex h-[25px] items-center">
            <Tools items={[':', 'helpDoc', 'helpPointer', ':', 'hand', 'rotateA', 'rotateB', 'rotateC', 'zoom', '|', 'zoomIn', 'zoomOut', '|', 'fitAll', 'fitSel', '|', 'undoGray', 'redo']} />
          </div>
          <div className="flex h-6 items-center">
            <Tools items={[':', 'boxes', 'boundary', ':', 'eye', '|', 'eyeOff1', 'eyeOff2', '|', 'eyeOff3', 'eyeOff4', 'eyeOff3', 'eyeOff4']} />
          </div>
        </div>

        <main className="flex">
          <aside className="w-[204px] shrink-0 pr-[5px] pb-[5px]">
            <div className="border-r border-white pt-px">
              <ProjectManager />
              <Properties />
            </div>
          </aside>
          <section className="flex min-w-0 flex-1 items-start border-t-2 border-r border-b border-l-2 border-[#606060] border-r-[#d4d0c8] bg-white pt-1.5 pl-[5px]">
            <Legend />
            <div className="mt-[68px] ml-[118px]">
              <PolarPlot />
            </div>
          </section>
        </main>

        <div className="mt-1 flex border-t-2 border-[#505050]">
          <Messages />
          <Progress />
        </div>

        <div className="flex h-4 items-center gap-0.5 border-t border-white pr-px pl-px">
          <span className="flex-1">Ready</span>
          <span className={clsx(sunken, 'h-3 w-5')} />
          <span className={clsx(sunken, 'h-3 w-6 text-center leading-[10px]')}>NUM</span>
          <span className={clsx(sunken, 'h-3 w-6')} />
        </div>
        <Taskbar />
      </div>
    </div>
  );
}
